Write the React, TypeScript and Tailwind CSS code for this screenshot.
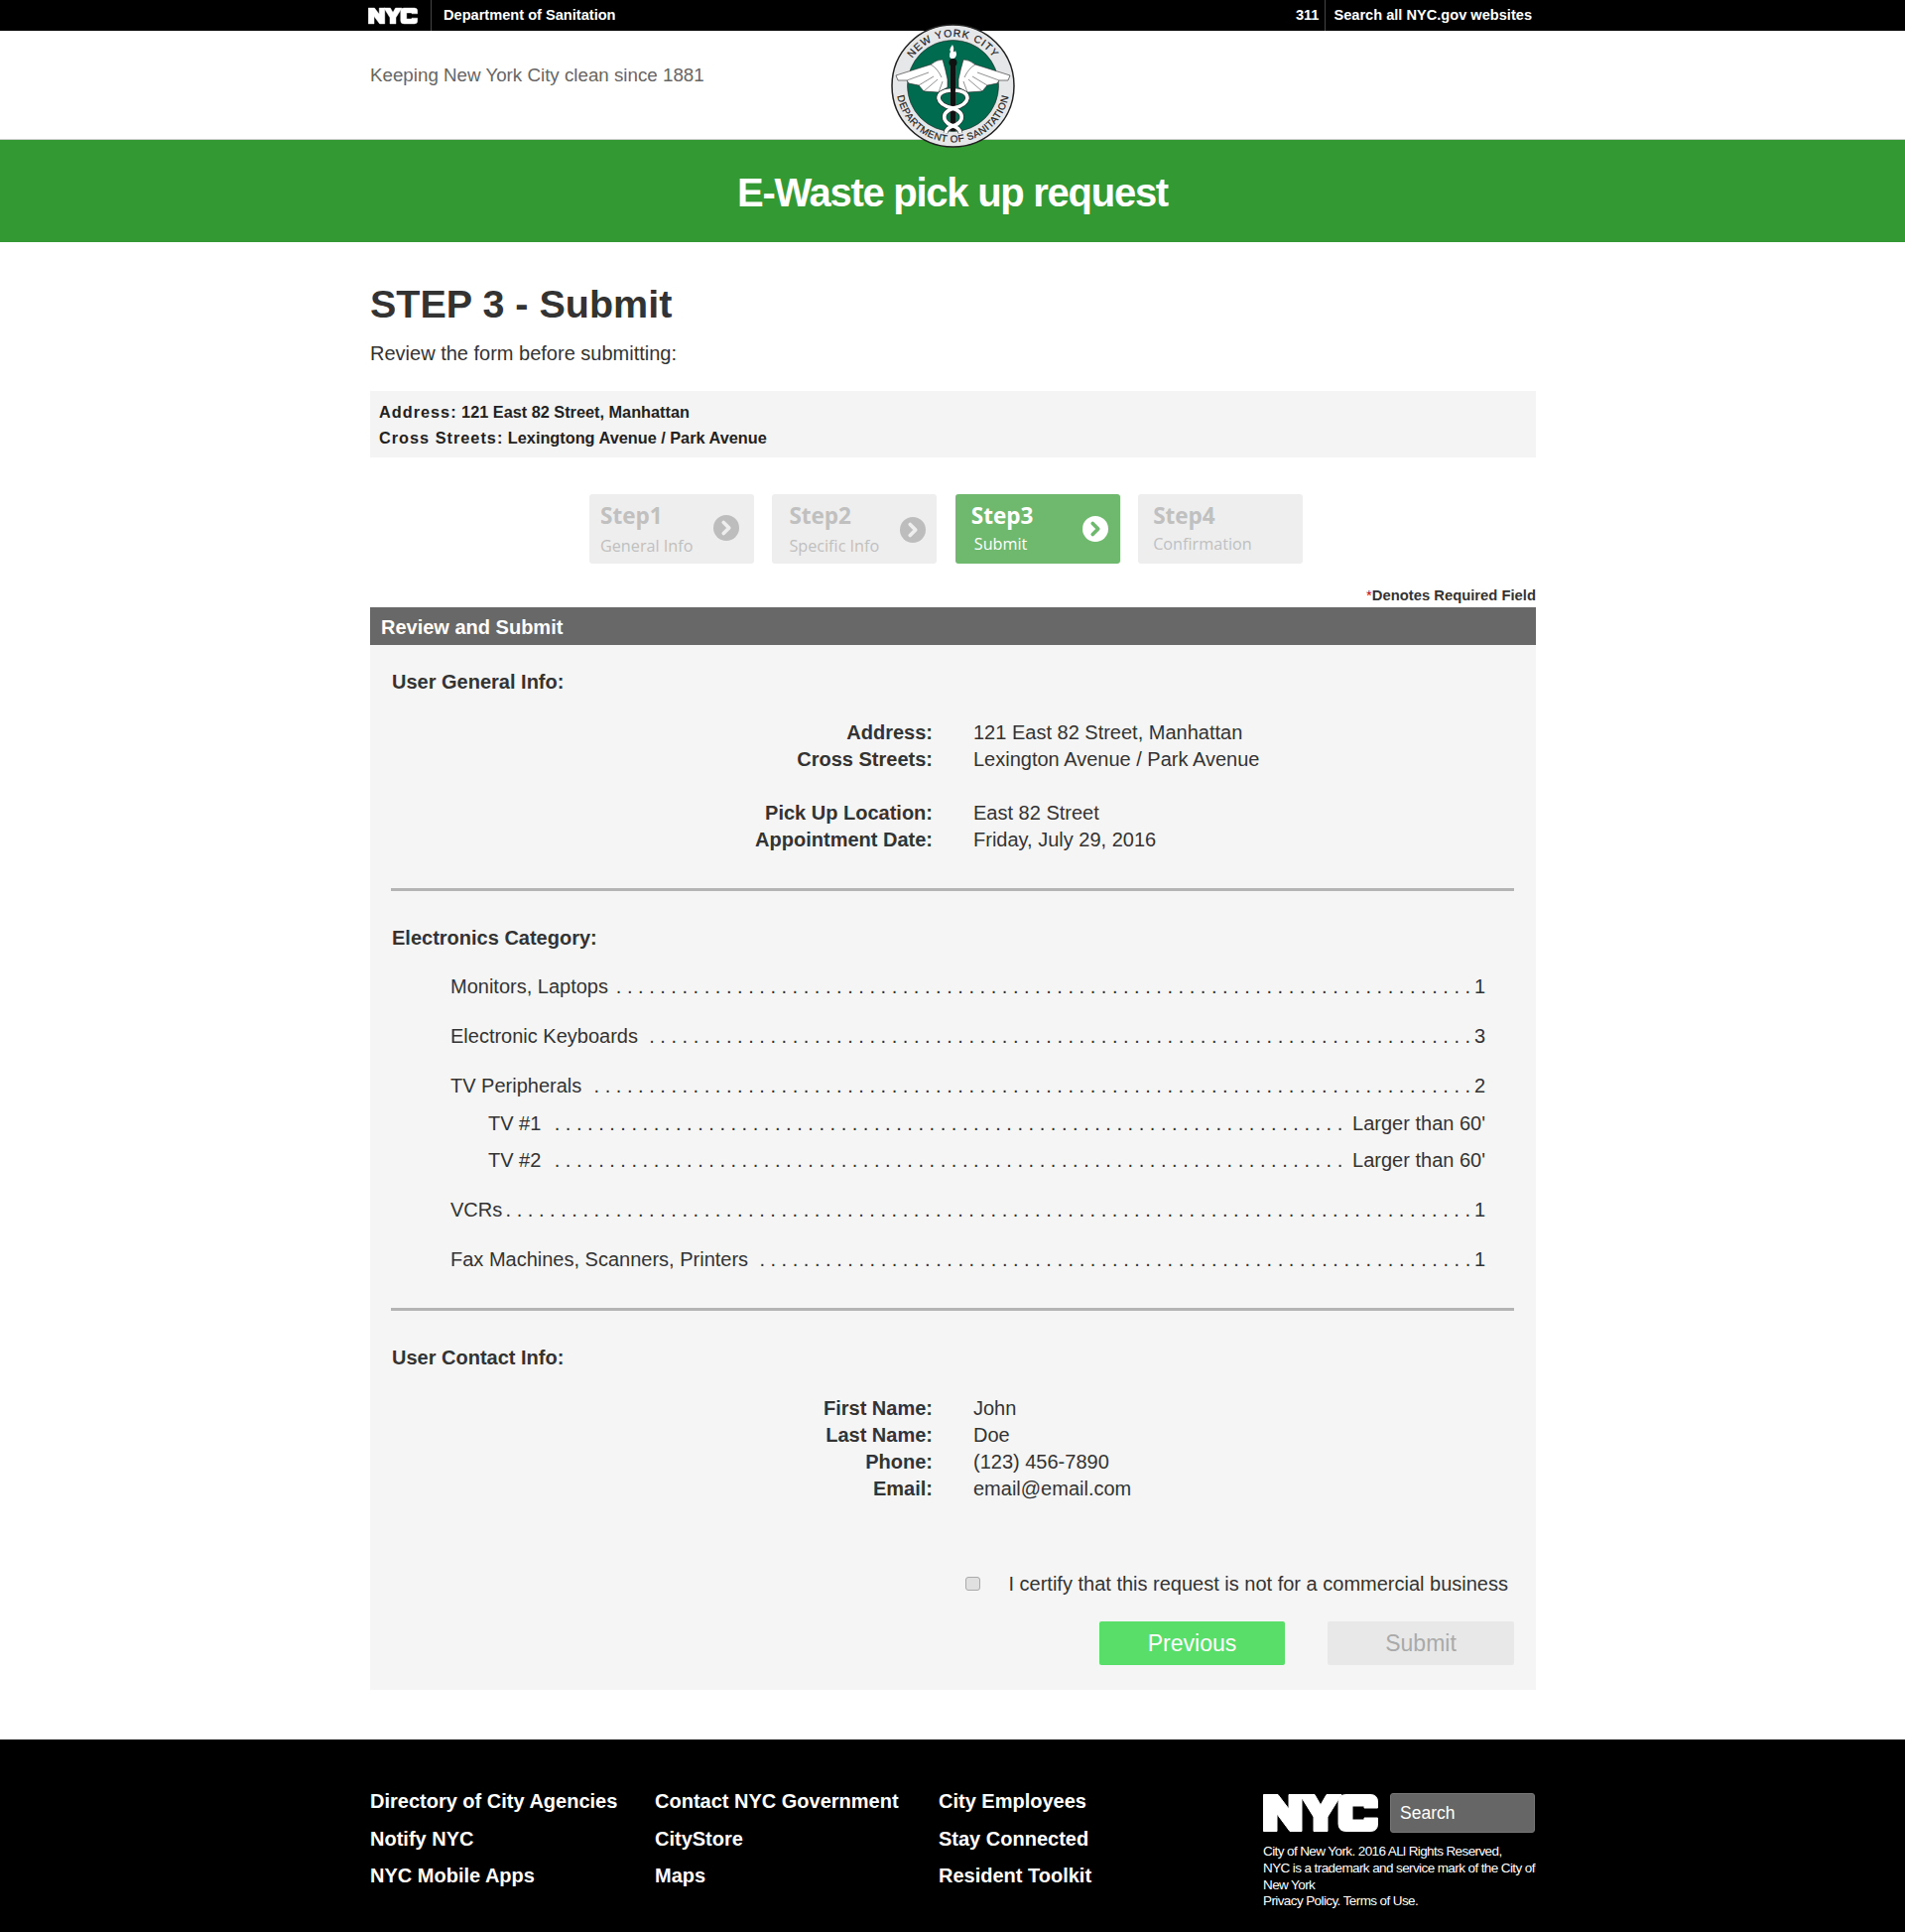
import React from 'react';
import { ChevronRight } from 'lucide-react';

const NycLogo = ({ className }: { className: string }) => (
    <svg viewBox="0 0 116 38" className={className} fill="#fff" stroke="#fff" strokeWidth="1" strokeLinejoin="round">
        <path d="M0.5 0.5H15L26 15V0.5H39V37.5H27L14 20V37.5H0.5Z" />
        <path d="M37 0.5H52L58 11L64 0.5H79L65 23V37.5H51V23Z" />
        <path d="M115.5 14H102V12H90V26H102V24H115.5V30Q115.5 37.5 108 37.5H84Q76 37.5 76 30V8Q76 0.5 84 0.5H108Q115.5 0.5 115.5 8Z" />
    </svg>
);

const Wing = () => (
    <g fill="#fff" stroke="#222" strokeWidth="0.6" strokeLinejoin="round">
        <path d="M57 64L48 69L33 68L28 62L18 60L16 57L7 57L5 52L40 41Q46 36 52 36Q55 46 57 56Z" />
        <path d="M16 57L38 49M28 62L43 53M33 68L47 56M48 69L52 58M40 41Q47 45 51 54" fill="none" strokeWidth="0.5" />
    </g>
);

const snakes = [
    'M60 67Q48 68 48 75Q49 82 62 85Q73 89 71 96Q69 101 62 103Q56 105 55 110',
    'M65 67Q77 68 77 75Q76 82 63 85Q52 89 54 96Q56 101 63 103Q69 105 70 110',
];

// the department seal, sits over the bars above and below it
const Seal = () => (
    <svg viewBox="0 0 125 125" className="absolute left-[898px] top-[24px] w-[125px] h-[125px]">
        <defs>
            <path id="sealTop" d="M13 62.5A49.5 49.5 0 0 1 112 62.5" />
            <path id="sealBottom" d="M5.5 62.5A57 57 0 0 0 119.5 62.5" />
        </defs>
        <circle cx="62.5" cy="62.5" r="61.5" fill="#e6e7e8" stroke="#222" strokeWidth="1.5" />
        <circle cx="62.5" cy="62.5" r="46" fill="#006b4f" stroke="#222" strokeWidth="0.6" />
        <text fill="#222" stroke="#222" strokeWidth="0.2" fontSize="10.5" fontFamily="'Liberation Sans', sans-serif" textAnchor="middle" letterSpacing="1">
            <textPath href="#sealTop" startOffset="50%">NEW YORK CITY</textPath>
        </text>
        <text fill="#222" stroke="#222" strokeWidth="0.2" fontSize="10" fontFamily="'Liberation Sans', sans-serif" textAnchor="middle" letterSpacing="0.5">
            <textPath href="#sealBottom" startOffset="50%">DEPARTMENT OF SANITATION</textPath>
        </text>
        <Wing />
        <g transform="translate(125 0) scale(-1 1)">
            <Wing />
        </g>
        <path d="M62 21Q58 26 60 28Q57 33 62 36Q68 33 65 27Q64 29 63 28Q64 24 62 21Z" fill="#fff" />
        <circle cx="62.5" cy="39" r="4" fill="#111" />
        <path d="M60 40H65V108H60Z" fill="#111" />
        <g fill="none" stroke="#222" strokeWidth="4.6">
            {snakes.map((d) => <path key={d} d={d} />)}
        </g>
        <g fill="none" stroke="#fff" strokeWidth="3.6">
            {snakes.map((d) => <path key={d} d={d} />)}
        </g>
    </svg>
);

const steps = [
    { title: 'Step1', sub: 'General Info', active: false, hasIcon: true, box: 'pl-[11px] pr-[15px]', icon: 'mt-[-2px]', subClass: 'mt-[6px]' },
    { title: 'Step2', sub: 'Specific Info', active: false, hasIcon: true, box: 'pl-[17px] pr-[11px]', icon: 'mt-[2px]', subClass: 'mt-[6px]' },
    { title: 'Step3', sub: 'Submit', active: true, hasIcon: true, box: 'pl-[16px] pr-[12px]', icon: '', subClass: 'mt-[4px] ml-[3px]' },
    { title: 'Step4', sub: 'Confirmation', active: false, hasIcon: false, box: 'pl-[15px] pr-[12px]', icon: '', subClass: 'mt-[4px]' },
];

const StepBox = ({ title, sub, active, hasIcon, box, icon, subClass }: { title: string; sub: string; active: boolean; hasIcon: boolean; box: string; icon: string; subClass: string }) => (
    <div className={`w-[166px] h-[70px] rounded-[3px] flex items-center justify-between font-['Open_Sans',sans-serif] ${box} ${active ? 'bg-[#6fb96f] text-white' : 'bg-[#eeeeee] text-[#c0c0c0]'}`}>
        <div className="h-[54px]">
            <div className="text-[22.5px] leading-[28px] font-bold">{title}</div>
            <div className={`text-[16.2px] leading-[20px] ${subClass}`}>{sub}</div>
        </div>
        {hasIcon && (
            <div className={`w-[26px] h-[26px] rounded-full flex items-center justify-center ${icon} ${active ? 'bg-white text-[#6fb96f]' : 'bg-[#bdbdbd] text-[#eeeeee]'}`}>
                <ChevronRight size={22} strokeWidth={4} />
            </div>
        )}
    </div>
);

const InfoRow = ({ label, value }: { label: string; value: string }) => (
    <div className="flex h-[27px] leading-[27px]">
        <div className="w-[567px] text-right font-bold">{label}</div>
        <div className="ml-[41px]">{value}</div>
    </div>
);

// label box is a whole number of dot cells wide, so the dots line up from row to row
const LeaderRow = ({ label, value, labelWidth, count, className }: { label: string; value: string; labelWidth: string; count: number; className: string }) => (
    <div className={`flex h-[26px] leading-[26px] whitespace-nowrap ${className}`}>
        <span className={labelWidth}>{label}</span>
        <span>{'. '.repeat(count).trim()}</span>
        <span className="ml-auto">{value}</span>
    </div>
);

const SectionTitle = ({ children, className }: { children: string; className: string }) => (
    <div className={`ml-[22px] h-[26px] leading-[26px] font-bold ${className}`}>{children}</div>
);

const footerLinks = [
    { width: 'w-[287px]', links: ['Directory of City Agencies', 'Notify NYC', 'NYC Mobile Apps'] },
    { width: 'w-[286px]', links: ['Contact NYC Government', 'CityStore', 'Maps'] },
    { width: 'w-[327px]', links: ['City Employees', 'Stay Connected', 'Resident Toolkit'] },
];

const App = () => {
    return (
        <div className="relative w-[1920px] min-h-[1947px] bg-white text-[20px] text-[#333333] font-['Liberation_Sans',Arial,sans-serif]">
            <header className="h-[31px] bg-black text-white text-[14.6px] font-bold pl-[371px] flex items-center">
                <NycLogo className="w-[50px] h-[18px]" />
                <div className="ml-[13px] h-[31px] border-l border-[#444444]" />
                <span className="ml-[12px]">Department of Sanitation</span>
                <span className="ml-auto">311</span>
                <div className="ml-[6px] h-[31px] border-l border-[#444444]" />
                <span className="ml-[8px] mr-[376px]">Search all NYC.gov websites</span>
            </header>
            <div className="h-[110px] border-b border-[#cccccc] pl-[373px] pt-[32px] text-[18.75px] leading-[26px] text-[#666666]">
                Keeping New York City clean since 1881
            </div>
            <div className="h-[103px] pt-[3px] bg-[#339933] flex items-center justify-center text-white text-[40px] font-bold tracking-[-1.27px]">
                E-Waste pick up request
            </div>
            <Seal />

            <main className="ml-[373px] w-[1175px]">
                <h1 className="mt-[40px] h-[44px] leading-[44px] text-[39.5px] font-bold">STEP 3 - Submit</h1>
                <p className="mt-[15px] h-[26px] leading-[26px]">Review the form before submitting:</p>
                <div className="mt-[25px] h-[67px] bg-[#f4f4f4] pl-[9px] pt-[8px] text-[16.3px] leading-[26px] text-[#222222] font-bold">
                    <div><span className="tracking-[1px]">Address:</span> 121 East 82 Street, Manhattan</div>
                    <div><span className="tracking-[1px]">Cross Streets:</span> Lexingtong Avenue / Park Avenue</div>
                </div>
                <div className="mt-[37px] ml-[221px] flex gap-[18.4px]">
                    {steps.map((step) => (
                        <StepBox key={step.title} {...step} />
                    ))}
                </div>
                <div className="mt-[22px] h-[21px] leading-[21px] text-right text-[14.8px] font-bold">
                    <span className="text-[#cc0000] font-normal">*</span>Denotes Required Field
                </div>
                <div className="mt-[1px] h-[38px] leading-[40px] bg-[#686868] pl-[11px] text-[20px] font-bold text-white">Review and Submit</div>

                <section className="bg-[#f5f5f5] pt-[24px] pb-[25px]">
                    <SectionTitle className="">User General Info:</SectionTitle>
                    <div className="mt-[25px]">
                        <InfoRow label="Address:" value="121 East 82 Street, Manhattan" />
                        <InfoRow label="Cross Streets:" value="Lexington Avenue / Park Avenue" />
                    </div>
                    <div className="mt-[27px]">
                        <InfoRow label="Pick Up Location:" value="East 82 Street" />
                        <InfoRow label="Appointment Date:" value="Friday, July 29, 2016" />
                    </div>
                    <hr className="mt-[35px] ml-[21px] mr-[22px] border-0 h-[3px] bg-[#b4b4b4]" />

                    <SectionTitle className="mt-[34px]">Electronics Category:</SectionTitle>
                    <div className="ml-[81px] mr-[51px] mt-[23px]">
                        <LeaderRow label="Monitors, Laptops" value="1" labelWidth="w-[166.8px]" count={78} className="" />
                        <LeaderRow label="Electronic Keyboards" value="3" labelWidth="w-[200.2px]" count={75} className="mt-[24px]" />
                        <LeaderRow label="TV Peripherals" value="2" labelWidth="w-[144.6px]" count={80} className="mt-[24px]" />
                        <LeaderRow label="TV #1" value="Larger than 60'" labelWidth="w-[66.7px]" count={72} className="mt-[12px] ml-[38px]" />
                        <LeaderRow label="TV #2" value="Larger than 60'" labelWidth="w-[66.7px]" count={72} className="mt-[11px] ml-[38px]" />
                        <LeaderRow label="VCRs" value="1" labelWidth="w-[55.6px]" count={88} className="mt-[24px]" />
                        <LeaderRow label="Fax Machines, Scanners, Printers" value="1" labelWidth="w-[311.4px]" count={65} className="mt-[24px]" />
                    </div>
                    <hr className="mt-[36px] ml-[21px] mr-[22px] border-0 h-[3px] bg-[#b4b4b4]" />

                    <SectionTitle className="mt-[34px]">User Contact Info:</SectionTitle>
                    <div className="mt-[25px]">
                        <InfoRow label="First Name:" value="John" />
                        <InfoRow label="Last Name:" value="Doe" />
                        <InfoRow label="Phone:" value="(123) 456-7890" />
                        <InfoRow label="Email:" value="email@email.com" />
                    </div>

                    <div className="mt-[69px] h-[26px] flex items-center justify-end pr-[28px]">
                        <input type="checkbox" className="w-[15px] h-[14px] appearance-none rounded-[3px] border border-[#aaaaaa] bg-[#e0e0e0]" />
                        <span className="ml-[28px] leading-[26px]">I certify that this request is not for a commercial business</span>
                    </div>
                    <div className="mt-[25px] flex justify-end gap-[43px] pr-[22px]">
                        <button className="w-[187px] h-[44px] rounded-[2px] bg-[#5ade6a] text-white text-[23px]">Previous</button>
                        <button className="w-[188px] h-[44px] rounded-[2px] bg-[#e8e8e8] text-[#aaaaaa] text-[23px]">Submit</button>
                    </div>
                </section>
            </main>

            <footer className="mt-[50px] h-[194px] bg-black text-white pl-[373px] pt-[44px] flex">
                {footerLinks.map((col) => (
                    <ul key={col.links[0]} className={`${col.width} text-[20px] font-bold leading-[37.5px]`}>
                        {col.links.map((link) => (
                            <li key={link}>{link}</li>
                        ))}
                    </ul>
                ))}
                <div className="w-[275px] mt-[10px]">
                    <div className="flex items-center">
                        <NycLogo className="w-[116px] h-[38px]" />
                        <div className="ml-[12px] w-[146px] h-[40px] rounded-[3px] border border-[#777777] bg-[#666666] pl-[9px] text-[17.5px] leading-[38px]">Search</div>
                    </div>
                    <p className="mt-[11px] text-[13.5px] leading-[16.8px] tracking-[-0.6px]">
                        City of New York. 2016 ALl Rights Reserved,<br />
                        NYC is a trademark and service mark of the City of New York<br />
                        Privacy Policy. Terms of Use.
                    </p>
                </div>
            </footer>
        </div>
    );
};

export default App;
